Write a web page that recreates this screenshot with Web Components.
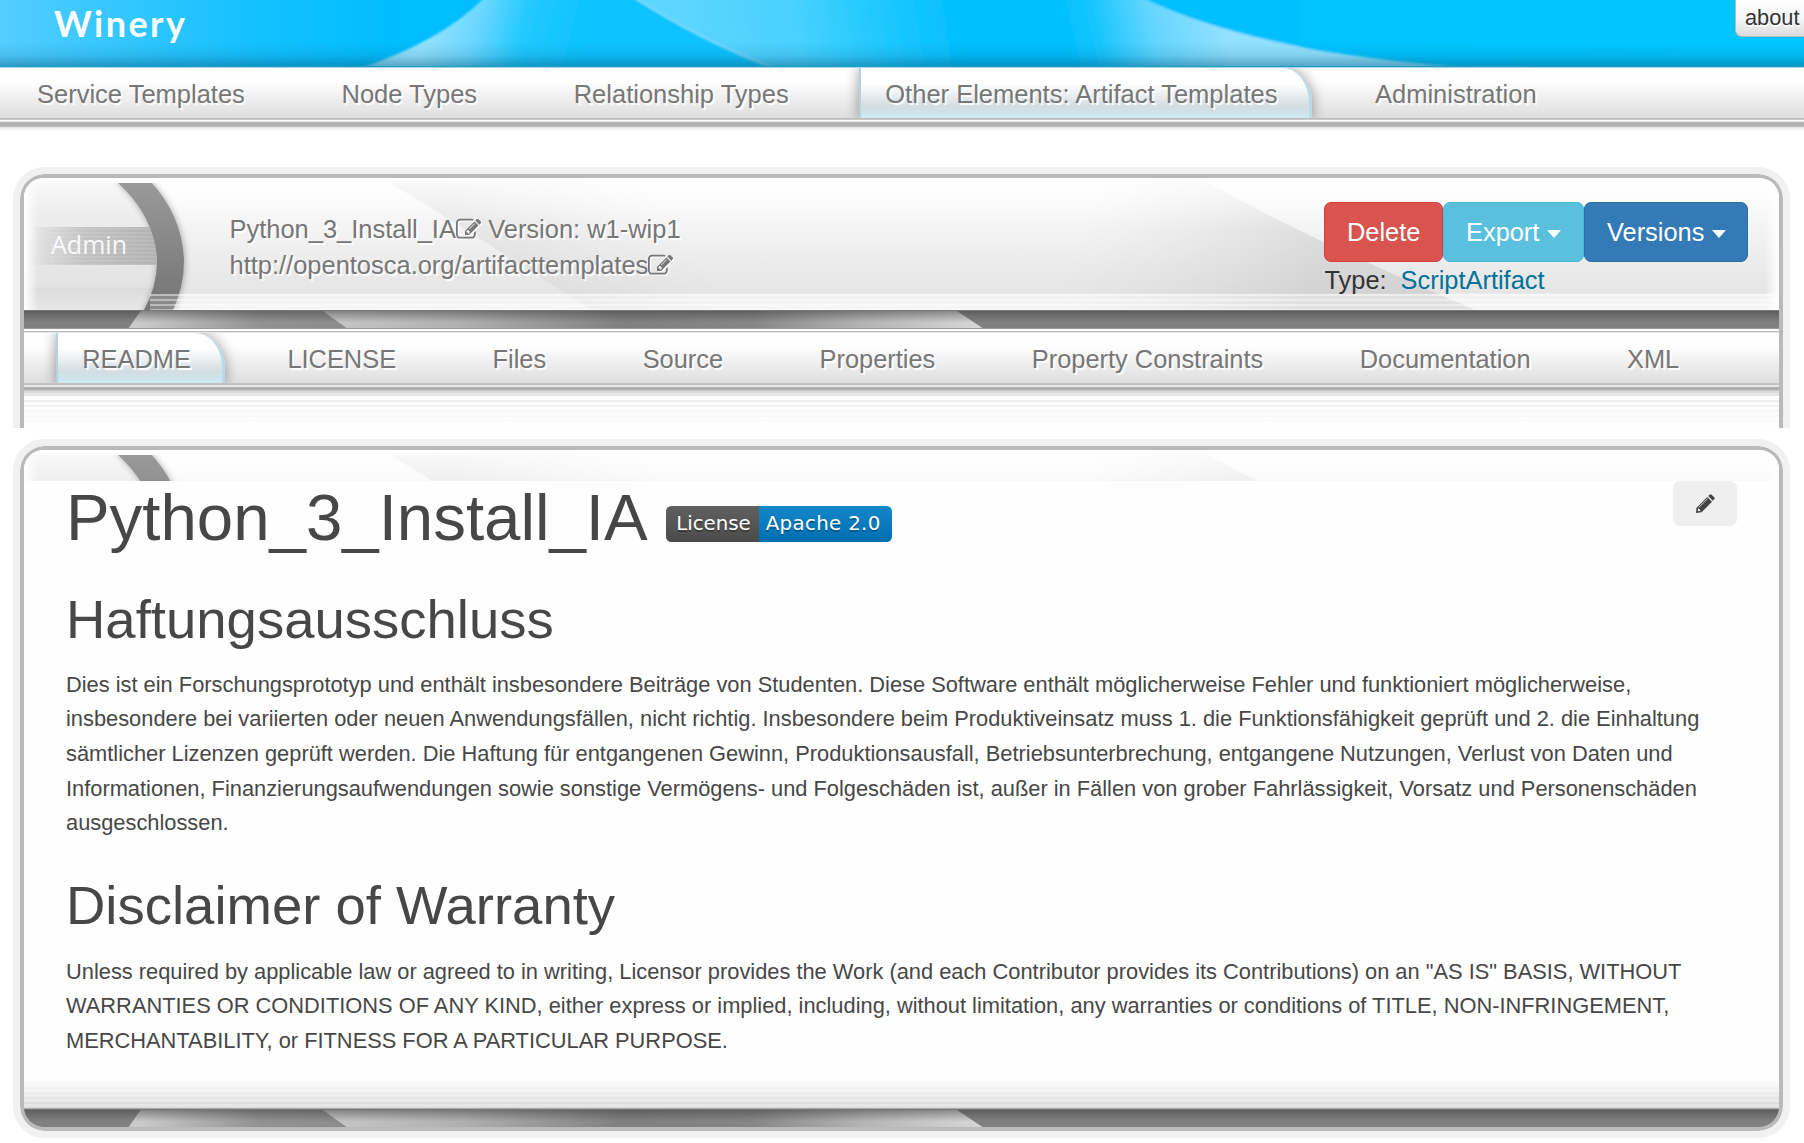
<!DOCTYPE html>
<html lang="en">
<head>
<meta charset="utf-8">
<title>Winery</title>
<style>
html,body{margin:0;padding:0;background:#fff;overflow:hidden}
body{font-family:"Liberation Sans",Arial,sans-serif;font-size:25.4px;color:#333;width:1804px;height:1143px}
</style>
</head>
<body>
<winery-app></winery-app>
<script>
const define=(name,html,after)=>{
  const t=document.createElement('template');t.innerHTML=html;
  customElements.define(name,class extends HTMLElement{
    constructor(){super();this.attachShadow({mode:'open'}).appendChild(t.content.cloneNode(true));}
    connectedCallback(){if(after)after(this,this.shadowRoot);}
  });
};

/* Blue banner with logo text and the about button */
define('winery-banner',`
<style>
:host{display:grid;height:68px;grid-template-columns:1fr;overflow:hidden}
svg{grid-area:1/1;display:block}
.side{grid-area:1/1;justify-self:end;align-self:start;z-index:1}
</style>
<svg width="1804" height="68" viewBox="0 0 1804 68">
<defs>
<linearGradient id="base" x1="0" x2="1804" y1="0" y2="0" gradientUnits="userSpaceOnUse"><stop offset="0" stop-color="#55cdff"/><stop offset=".04" stop-color="#3fc9ff"/><stop offset=".14" stop-color="#14c1ff"/><stop offset=".22" stop-color="#00bdff"/><stop offset="1" stop-color="#00c6ff"/></linearGradient>
<linearGradient id="s1" gradientUnits="userSpaceOnUse" x1="430" y1="20" x2="580" y2="60"><stop offset="0" stop-color="#94e2ff"/><stop offset=".3" stop-color="#6cd7ff"/><stop offset=".6" stop-color="#22c9ff"/><stop offset="1" stop-color="#0cc3ff"/></linearGradient>
<linearGradient id="s2" gradientUnits="userSpaceOnUse" x1="690" y1="50" x2="960" y2="10"><stop offset="0" stop-color="#5cd5ff"/><stop offset=".4" stop-color="#48d1ff"/><stop offset=".65" stop-color="#26caff"/><stop offset="1" stop-color="#00bfff"/></linearGradient>
<linearGradient id="s3" gradientUnits="userSpaceOnUse" x1="1225" y1="30" x2="1070" y2="65"><stop offset="0" stop-color="#92e1ff"/><stop offset=".45" stop-color="#62d5ff"/><stop offset=".8" stop-color="#14c5ff"/><stop offset="1" stop-color="#00bfff"/></linearGradient>
<linearGradient id="sh" x1="0" x2="0" y1="0" y2="1"><stop offset="0" stop-color="#066" stop-opacity="0"/><stop offset=".55" stop-color="#045070" stop-opacity=".12"/><stop offset="1" stop-color="#045878" stop-opacity=".45"/></linearGradient>
<filter id="soft"><feGaussianBlur stdDeviation=".8"/></filter>
</defs>
<rect width="1804" height="68" fill="url(#base)"/>
<g filter="url(#soft)">
<path d="M484 -2Q440 42 358 69L900 69L720 -2Z" fill="url(#s1)"/>
<path d="M635 -2Q700 40 778 70H1300V-2Z" fill="url(#s2)"/>
<path d="M1143 -2Q1260 55 1490 69H1000V-2Z" fill="url(#s3)"/>
<path d="M635 -2Q700 40 778 70" fill="none" stroke="#9be3ff" stroke-width="2" opacity=".7"/>
</g>
<rect y="42" width="1804" height="25" fill="url(#sh)"/>
<rect y="66" width="1804" height="1" fill="#1d9cc6"/>
<rect y="67" width="1804" height="1" fill="#a3d9ec"/>
<text x="54" y="36.5" textLength="131" lengthAdjust="spacing" font-family="Lato,sans-serif" font-weight="700" font-size="36" fill="#fff">Winery</text>
</svg>
<div class="side"><slot></slot></div>`);

define('about-button',`
<style>
:host{display:block;box-sizing:border-box;width:69px;height:37px;padding:0 0 0 9px;border:1px solid #bbb;border-width:0 0 1px 1px;border-radius:0 0 0 7px;background:linear-gradient(#fff,#f6f6f6 50%,#dcdcdc);font-size:21.8px;line-height:35px;color:#333;text-shadow:1px 2px 1px #fff;white-space:nowrap}
</style><slot></slot>`);

/* Tab bar and its tabs */
define('tab-bar',`
<style>
:host{display:block}
.row{display:flex;height:50px;overflow:hidden;background:linear-gradient(#fff,#fefefe 28%,#f0f0f0 58%,#dedede);padding-left:var(--lead,0)}
.edge{height:14px;background:linear-gradient(#bebebe 0 1px,#c9c9c9 1px 2px,#fff 2px 3px,#e2e2e2 3px 4px,#b9b9b9 4px 5px,#b0b0b0 5px 8px,#c4c4c4 8px 9px,#dedede 9px 10px,#efefef 10px 11px,#fafafa 12px,#fff)}
:host([sub]) .row{border-top:1px solid #e6e6e6}
:host([sub]) .edge{height:14px;background:linear-gradient(#c3c3c3 0 2px,#e6e6e6 2px 4px,#b5b5b5 4px 5px,#a8a8a8 5px 6px,#b4b4b4 6px 7px,#c6c6c6 7px 8px,#dadada 8px 10px,#e6e6e6 10px 13px,#fff 13px)}
</style><div class="row"><slot></slot></div><div class="edge"></div>`);

define('tab-item',`
<style>
:host{display:block;flex:none;font-size:25.5px;color:#777;text-shadow:2px 2px 1px #fff;white-space:nowrap}
:host([sub]){font-size:25.4px}
div{box-sizing:border-box;margin:0 14px 0 22px;height:51px;line-height:53px;padding:0 34px 0 26.6px}
:host([sub]) div{line-height:52px;padding-right:33.9px}
:host([active]) div{border-radius:0 30px 0 0/0 34px 0 0;border:2px solid #b4d3df;border-width:0 3px 0 2px;border-right-color:#b9dbe6;padding:0 31px 0 24.6px;background:linear-gradient(#fff,#fff 30%,#eef2f4 48%,#d3dde2 75%,#cfe4ec 90%,#caedf8);box-shadow:0 0 14px rgba(0,0,0,.4)}
:host([active]:not([sub])) div{padding-right:32px}
</style><div><slot></slot></div>`);

/* Rounded double frame */
define('glass-panel',`
<style>
:host{display:block;box-sizing:border-box;width:1777px;border:7px solid #f1f1f1;border-radius:32px;overflow:hidden}
.in{box-sizing:border-box;height:100%;border:4px solid #bababa;border-radius:24px;overflow:hidden;display:flex;flex-direction:column}
:host([open]){border-bottom:0;border-radius:32px 32px 0 0}
:host([open]) .in{border-bottom:0;border-radius:24px 24px 0 0}
</style><div class="in"><slot></slot></div>`);

/* Grey swoosh artwork of the panel header */
define('panel-art',`
<style>
:host{display:block;overflow:hidden;height:var(--h,132px)}
svg{display:block}
</style>
<svg width="1755" height="132" viewBox="24 178 1755 132">
<defs>
<linearGradient id="bg" x1="0" x2="0" y1="0" y2="1"><stop offset="0" stop-color="#fff"/><stop offset=".04" stop-color="#fdfdfd"/><stop offset=".4" stop-color="#f3f3f3"/><stop offset=".87" stop-color="#e5e5e5"/><stop offset=".88" stop-color="#efefef"/><stop offset="1" stop-color="#f4f4f4"/></linearGradient>
<linearGradient id="disc" x1="0" x2="0" y1="0" y2="1"><stop offset="0" stop-color="#fafafa"/><stop offset=".25" stop-color="#eee"/><stop offset=".81" stop-color="#e3e3e3"/><stop offset=".83" stop-color="#dcdcdc"/><stop offset="1" stop-color="#e9e9e9"/></linearGradient>
<linearGradient id="arc" x1="0" x2="0" y1="0" y2="1"><stop offset="0" stop-color="#9a9a9a"/><stop offset="1" stop-color="#737373"/></linearGradient>
<linearGradient id="pl" x1="0" x2="1" y1="0" y2="0"><stop offset="0" stop-color="#aaa" stop-opacity="0"/><stop offset=".45" stop-color="#b8b8b8" stop-opacity=".8"/><stop offset="1" stop-color="#b2b2b2"/></linearGradient>
<linearGradient id="d1" gradientUnits="userSpaceOnUse" x1="480" y1="245" x2="620" y2="150"><stop offset="0" stop-color="#c4c4c4" stop-opacity=".28"/><stop offset="1" stop-color="#ccc" stop-opacity="0"/></linearGradient>
<linearGradient id="d2" gradientUnits="userSpaceOnUse" x1="1320" y1="250" x2="1100" y2="180"><stop offset="0" stop-color="#b4b4b4" stop-opacity=".36"/><stop offset="1" stop-color="#ccc" stop-opacity="0"/></linearGradient>
<linearGradient id="tf" x1="0" x2="0" y1="0" y2="1"><stop offset="0" stop-color="#fff" stop-opacity=".6"/><stop offset="1" stop-color="#fff" stop-opacity="0"/></linearGradient>
<linearGradient id="lw" x1="0" x2="1" y1="0" y2="0"><stop offset="0" stop-color="#fff"/><stop offset=".2" stop-color="#fff" stop-opacity=".8"/><stop offset="1" stop-color="#fff" stop-opacity="0"/></linearGradient>
<linearGradient id="rw" x1="0" x2="1" y1="0" y2="0"><stop offset="0" stop-color="#fff" stop-opacity="0"/><stop offset="1" stop-color="#fff"/></linearGradient>
<pattern id="st" width="10" height="5" y="294" patternUnits="userSpaceOnUse"><rect width="10" height="2" fill="#fff" opacity=".5"/><rect y="2" width="10" height="3" fill="#fff" opacity=".15"/></pattern>
<pattern id="ps" width="10" height="4" patternUnits="userSpaceOnUse"><rect width="10" height="1.5" fill="#fff" opacity=".12"/></pattern>
<filter id="b1"><feGaussianBlur stdDeviation=".7"/></filter><filter id="b2"><feGaussianBlur stdDeviation="3"/></filter>
<clipPath id="cut"><rect x="24" y="183" width="1755" height="127"/></clipPath>
</defs>
<rect x="24" y="178" width="1755" height="132" fill="url(#bg)"/>
<g clip-path="url(#cut)">
<path d="M385 180Q460 225 594 312H900V180Z" fill="url(#d1)" filter="url(#b1)"/>
<path d="M1203 180Q1300 235 1480 312H900V180Z" fill="url(#d2)" filter="url(#b1)"/>
<rect x="150" y="183" width="1629" height="45" fill="url(#tf)"/>
<path d="M24 178H117Q156 216 158 262Q158 288 143 312H24Z" fill="url(#disc)"/>
<path d="M150 181Q183 215 185 260Q185 288 173 312H143Q158 285 157 258Q154 215 116 181Z" fill="#555" opacity=".45" filter="url(#b2)"/>
<rect x="30" y="227" width="127" height="38" fill="url(#pl)"/><rect x="50" y="227" width="107" height="38" fill="url(#ps)"/>
<path d="M150 181Q182 215 184 260Q184 288 172 312H143Q158 285 157 258Q154 215 116 181Z" fill="url(#arc)" filter="url(#b1)"/>
<rect x="150" y="294" width="1629" height="16" fill="url(#st)"/>
</g>
<rect x="24" y="178" width="14" height="132" fill="url(#lw)"/><rect x="1765" y="178" width="14" height="132" fill="url(#rw)"/>
<text x="51" y="254" textLength="76" font-family="Open Sans,sans-serif" font-size="25" fill="#fff" fill-opacity=".92" class="cap">Admin</text>
</svg>`,(el,r)=>{if(el.hasAttribute('plain'))r.querySelector('.cap').remove();});

/* Dark strip with light streaks */
define('dark-band',`
<style>:host{display:block;flex:none}svg{display:block}</style>
<svg width="1755" height="18" viewBox="24 0 1755 18" preserveAspectRatio="none">
<defs>
<linearGradient id="a" gradientUnits="userSpaceOnUse" x1="140" x2="340" y1="0" y2="0"><stop offset="0" stop-color="#cacaca"/><stop offset=".25" stop-color="#b2b2b2"/><stop offset=".6" stop-color="#929292"/><stop offset="1" stop-color="#8c8c8c"/></linearGradient>
<linearGradient id="b" gradientUnits="userSpaceOnUse" x1="330" x2="980" y1="0" y2="0"><stop offset="0" stop-color="#c6c6c6"/><stop offset=".2" stop-color="#b0b0b0"/><stop offset=".45" stop-color="#808080"/><stop offset=".65" stop-color="#868686"/><stop offset=".82" stop-color="#b4b4b4"/><stop offset="1" stop-color="#d6d6d6"/></linearGradient>
<linearGradient id="c" x1="0" x2="0" y1="0" y2="1"><stop offset="0" stop-color="#333" stop-opacity=".5"/><stop offset=".7" stop-color="#444" stop-opacity="0"/></linearGradient>
<filter id="f"><feGaussianBlur stdDeviation=".7"/></filter>
</defs>
<rect x="24" width="1755" height="18" fill="#808080"/>
<g filter="url(#f)"><path d="M142 -1L128 19H350L320 -1Z" fill="url(#a)"/><path d="M320 -1L348 19H984L954 -1Z" fill="url(#b)"/></g>
<rect x="24" width="1755" height="18" fill="url(#c)"/><rect x="24" width="1755" height="1" fill="#777"/>
</svg>`);

define('edit-icon',`
<style>:host{display:inline-block;width:25.2px;height:25.2px;vertical-align:-3.6px}svg{display:block;filter:drop-shadow(1.5px 1.5px 0 #fff)}</style>
<svg width="25.2" height="25.2" viewBox="0 0 1792 1792" fill="#777"><path d="M888 1184l116-116-152-152-116 116v56h96v96h56zm440-720q-16-16-33 1l-350 350q-17 17-1 33t33-1l350-350q17-17 1-33zm80 594v190q0 119-84.5 203.5t-203.5 84.5h-832q-119 0-203.5-84.5t-84.5-203.5v-832q0-119 84.5-203.5t203.5-84.5h832q63 0 117 25 15 7 18 23 3 17-9 29l-49 49q-14 14-32 8-23-6-45-6h-832q-66 0-113 47t-47 113v832q0 66 47 113t113 47h832q66 0 113-47t47-113v-126q0-13 9-22l64-64q15-15 35-7t20 29zm-96-738l288 288-672 672h-288v-288zm444 132l-92 92-288-288 92-92q28-28 68-28t68 28l152 152q28 28 28 68t-28 68z"/></svg>`);

define('action-button',`
<style>
:host{display:flex;align-items:center;box-sizing:border-box;height:60px;border:1px solid var(--line);border-radius:7px;background:var(--fill);color:#fff;font-size:25.4px;padding:0 0 0 22px;white-space:nowrap}
i{display:none;margin-left:7.5px;margin-top:4px;border:7px solid transparent;border-top:8px solid #fff;border-bottom:0}
:host([menu]) i{display:block}
</style><slot></slot><i></i>`);

define('entity-header',`
<style>
:host{display:grid;height:132px;flex:none}
panel-art{grid-area:1/1}
.info{grid-area:1/1;z-index:1;display:flex;justify-content:space-between;padding:0 31px 0 205.5px}
.name{padding-top:33.3px;line-height:36px;font-size:25.46px;color:#777;text-shadow:2px 2px 1px #fff;white-space:nowrap}
.right{padding-top:24px;width:424px;white-space:nowrap}
.btns{display:flex}
.type{line-height:36px;padding-left:.5px;color:#333}
.type a{color:#007299;margin-left:14px}
</style>
<panel-art></panel-art>
<div class="info">
<div class="name"><div>Python_3_Install_IA<edit-icon></edit-icon> Version: w1-wip1</div><div>http://opentosca.org/artifacttemplates<edit-icon></edit-icon></div></div>
<div class="right"><div class="btns">
<action-button style="width:119px;--fill:#d9534f;--line:#d43f3a">Delete</action-button>
<action-button menu style="width:141px;--fill:#5bc0de;--line:#46b8da">Export</action-button>
<action-button menu style="width:164px;--fill:#337ab7;--line:#2e6da4">Versions</action-button>
</div><div class="type">Type:<a>ScriptArtifact</a></div></div>
</div>`);

define('license-badge',`
<style>
:host{display:flex;width:226px;height:36px;border-radius:5.5px;overflow:hidden;font:19.8px/35px "DejaVu Sans",sans-serif;color:#fff;text-shadow:0 2px 0 rgba(1,1,1,.3);white-space:nowrap}
span{box-sizing:border-box}
.l{width:93px;padding-left:10.5px;background:linear-gradient(#606060,#4b4b4b)}
.r{flex:1;padding-left:7px;background:linear-gradient(#1486c8,#006fb2);letter-spacing:.35px}
</style><span class="l">License</span><span class="r">Apache 2.0</span>`);

define('pencil-button',`
<style>:host{display:flex;align-items:center;justify-content:center;width:64px;height:45px;border-radius:7px;background:#efefef}svg{display:block;margin:0}</style>
<svg width="19" height="19" viewBox="0 0 19 19"><path fill="#444" d="M13.6.7Q14.6-.2 15.6.7L18.2 3.3Q19.1 4.3 18.2 5.3L16.9 6.7 12.2 2.1ZM11.3 3L16 7.7 5.6 18.3 0 19 .4 13.9Z"/><path d="M3 13.2L11.6 4.6" stroke="#efefef" stroke-width=".8"/><path fill="#efefef" d="M2.1 14L4.9 16.8 2.5 17.3 1.7 16.4Z"/></svg>`);

define('readme-view',`
<style>
:host{display:block;background:#fefefe;height:598px;padding:0 42px 0 42px;color:#474747;box-sizing:border-box;flex:none}
.top{display:flex;align-items:flex-start;height:72px}
h1,h2,p{margin:0;font-weight:400}
h1{font-size:65.4px;line-height:70px;padding-top:2px;white-space:nowrap}
license-badge{margin:25px 0 0 18px}
pencil-button{margin-left:auto}
h2{font-size:54.5px;line-height:60px;margin:37px 0 17.9px}
p{font-size:21.83px;line-height:34.56px;white-space:nowrap}
p+h2{margin-top:35.6px;margin-bottom:18.3px}
</style>
<div class="top"><h1>Python_3_Install_IA</h1><license-badge></license-badge><pencil-button></pencil-button></div>
<h2>Haftungsausschluss</h2>
<p>Dies ist ein Forschungsprototyp und enthält insbesondere Beiträge von Studenten. Diese Software enthält möglicherweise Fehler und funktioniert möglicherweise,<br>insbesondere bei variierten oder neuen Anwendungsfällen, nicht richtig. Insbesondere beim Produktiveinsatz muss 1. die Funktionsfähigkeit geprüft und 2. die Einhaltung<br>sämtlicher Lizenzen geprüft werden. Die Haftung für entgangenen Gewinn, Produktionsausfall, Betriebsunterbrechung, entgangene Nutzungen, Verlust von Daten und<br>Informationen, Finanzierungsaufwendungen sowie sonstige Vermögens- und Folgeschäden ist, außer in Fällen von grober Fahrlässigkeit, Vorsatz und Personenschäden<br>ausgeschlossen.</p>
<h2>Disclaimer of Warranty</h2>
<p>Unless required by applicable law or agreed to in writing, Licensor provides the Work (and each Contributor provides its Contributions) on an "AS IS" BASIS, WITHOUT<br>WARRANTIES OR CONDITIONS OF ANY KIND, either express or implied, including, without limitation, any warranties or conditions of TITLE, NON-INFRINGEMENT,<br>MERCHANTABILITY, or FITNESS FOR A PARTICULAR PURPOSE.</p>`);

define('winery-app',`
<style>
:host{display:flex;flex-direction:column;width:1804px;height:1143px;overflow:hidden}
.nav{--lead:0px}
.nav tab-item:first-child{margin-left:-11.6px}
.first{margin:35px 0 0 13px;height:261px}
.second{margin:11px 0 0 13px;height:699px}
.sep{flex:none;height:4px;background:linear-gradient(#9a9a9a 0 1px,#fff 1px 3px,#bcbcbc 3px 4px)}
.sub{--lead:9.6px}
.fade{flex:none;height:32px;background:linear-gradient(rgba(255,255,255,.1),#fff),repeating-linear-gradient(#fcfcfc 0 3px,#ececec 3px 5px)}
.fade.up{height:29px;border-bottom:1px solid #aaa;background:linear-gradient(#fefefe,rgba(255,255,255,0)),repeating-linear-gradient(#e4e4e4 0 3px,#d8d8d8 3px 5px)}
.strip{--h:31px;flex:none}
</style>
<winery-banner><about-button>about</about-button></winery-banner>
<tab-bar class="nav"><tab-item>Service Templates</tab-item><tab-item>Node Types</tab-item><tab-item>Relationship Types</tab-item><tab-item active>Other Elements: Artifact Templates</tab-item><tab-item>Administration</tab-item></tab-bar>
<glass-panel open class="first">
<entity-header></entity-header>
<dark-band></dark-band>
<div class="sep"></div>
<tab-bar sub class="sub"><tab-item sub active>README</tab-item><tab-item sub>LICENSE</tab-item><tab-item sub>Files</tab-item><tab-item sub>Source</tab-item><tab-item sub>Properties</tab-item><tab-item sub>Property Constraints</tab-item><tab-item sub>Documentation</tab-item><tab-item sub>XML</tab-item></tab-bar>
<div class="fade"></div>
</glass-panel>
<glass-panel class="second">
<panel-art plain class="strip"></panel-art>
<readme-view></readme-view>
<div class="fade up"></div>
<dark-band></dark-band>
</glass-panel>`);
</script>
</body>
</html>
